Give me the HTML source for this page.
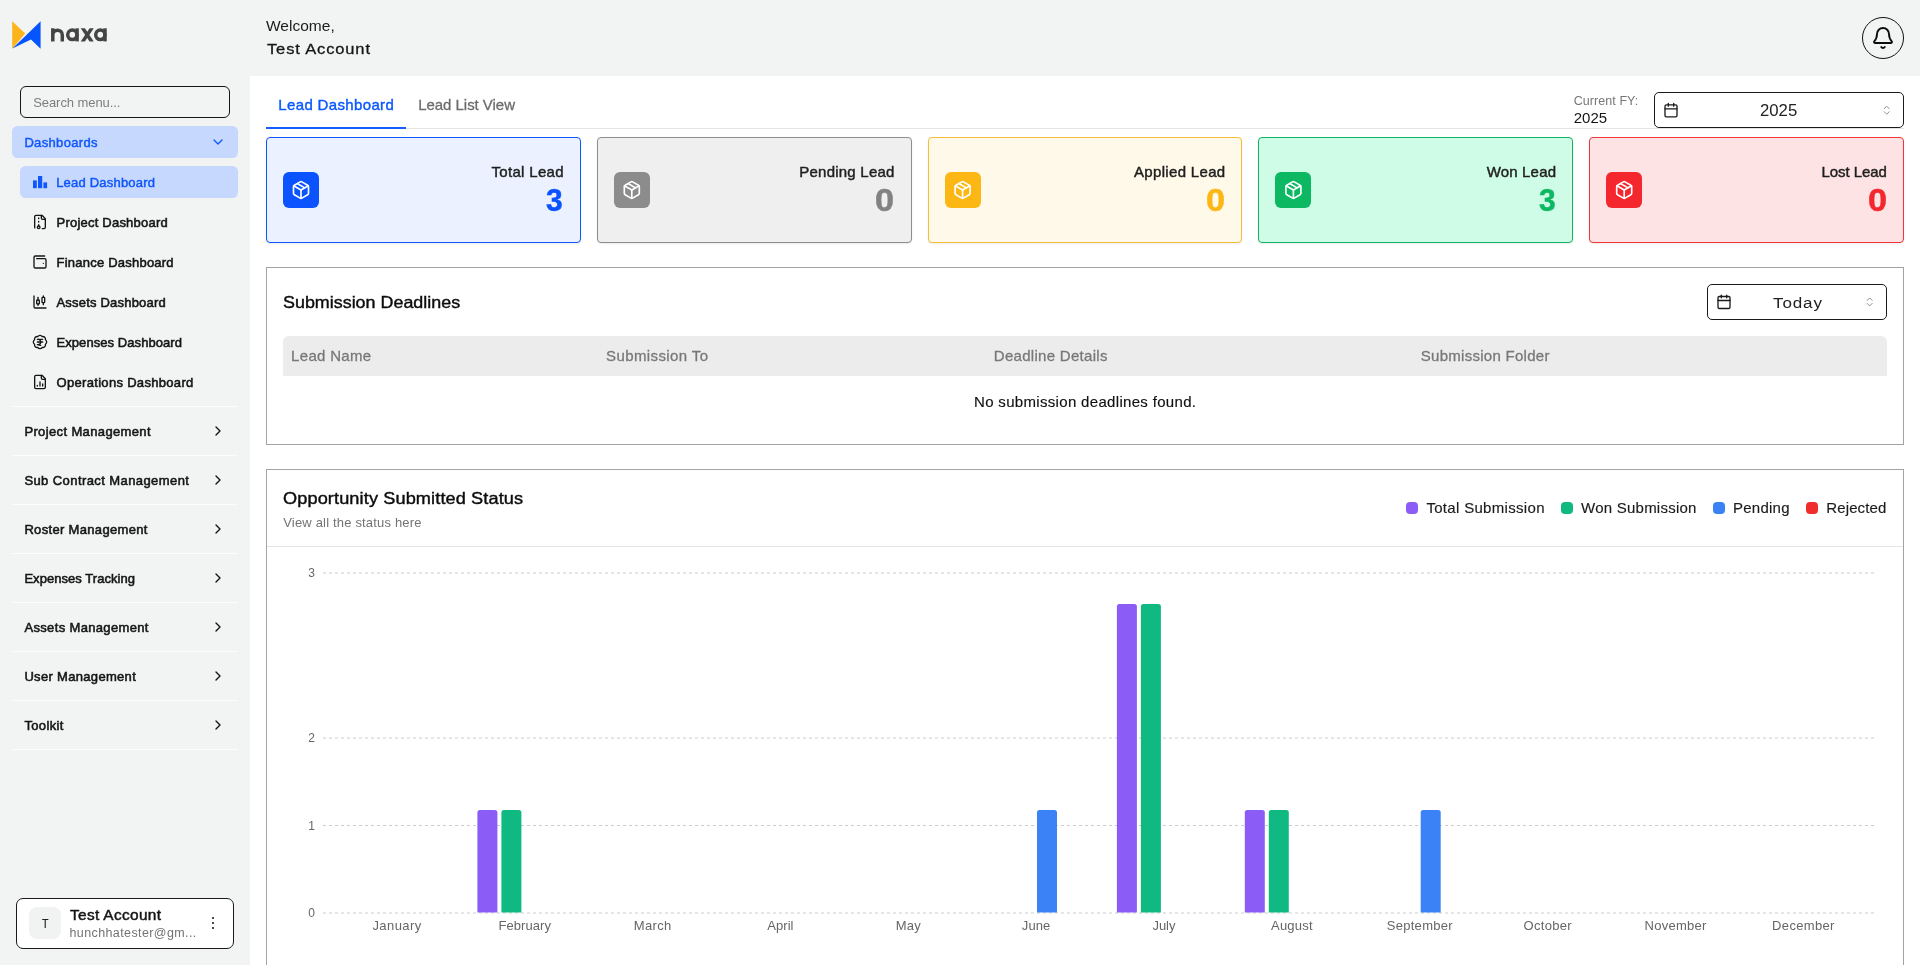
<!DOCTYPE html>
<html lang="en"><head><meta charset="utf-8"><title>Lead Dashboard</title>
<style>
html,body{margin:0;padding:0;}
body{width:1920px;height:965px;overflow:hidden;background:#f2f4f3;position:relative;font-family:"Liberation Sans", sans-serif;}
.b{position:absolute;}
.t{position:absolute;white-space:pre;line-height:1;font-family:"Liberation Sans", sans-serif;transform-origin:0 0;}
svg.ov{position:absolute;left:0;top:0;}
.tx{position:absolute;left:0;top:0;width:1920px;height:965px;will-change:transform;transform:translateZ(0);}
</style></head><body>
<div class="b" style="left:250px;top:76px;width:1670px;height:889px;background:#fff;"></div>
<div class="b" style="left:20px;top:86px;width:210px;height:32px;border:1.5px solid #161616;border-radius:6px;box-sizing:border-box;"></div>
<div class="b" style="left:12px;top:126px;width:226px;height:32px;background:#c6d8fd;border-radius:5.5px;"></div>
<div class="b" style="left:20px;top:166px;width:218px;height:32px;background:#c6d8fd;border-radius:5.5px;"></div>
<div class="b" style="left:12px;top:406px;width:226px;height:1px;background:#fbfcfc;"></div>
<div class="b" style="left:12px;top:455px;width:226px;height:1px;background:#fbfcfc;"></div>
<div class="b" style="left:12px;top:504px;width:226px;height:1px;background:#fbfcfc;"></div>
<div class="b" style="left:12px;top:553px;width:226px;height:1px;background:#fbfcfc;"></div>
<div class="b" style="left:12px;top:602px;width:226px;height:1px;background:#fbfcfc;"></div>
<div class="b" style="left:12px;top:651px;width:226px;height:1px;background:#fbfcfc;"></div>
<div class="b" style="left:12px;top:700px;width:226px;height:1px;background:#fbfcfc;"></div>
<div class="b" style="left:12px;top:749px;width:226px;height:1px;background:#fbfcfc;"></div>
<div class="b" style="left:16px;top:898px;width:218px;height:51px;background:#fff;border:1px solid #1a1a1a;border-radius:7px;box-sizing:border-box;"></div>
<div class="b" style="left:29px;top:907px;width:32px;height:32px;background:#f1f3f3;border-radius:8px;"></div>
<div class="b" style="left:211.7px;top:916.9000000000001px;width:2.6px;height:2.6px;background:#111;border-radius:50%;"></div>
<div class="b" style="left:211.7px;top:921.8000000000001px;width:2.6px;height:2.6px;background:#111;border-radius:50%;"></div>
<div class="b" style="left:211.7px;top:926.7px;width:2.6px;height:2.6px;background:#111;border-radius:50%;"></div>
<div class="b" style="left:266px;top:128px;width:1638px;height:1px;background:#e4e4e4;"></div>
<div class="b" style="left:266px;top:126.5px;width:140px;height:2px;background:#155dfc;"></div>
<div class="b" style="left:1654px;top:92px;width:250px;height:36px;border:1px solid #1b1b1b;border-radius:5px;box-sizing:border-box;background:#fff;"></div>
<div class="b" style="left:1862px;top:17px;width:42px;height:42px;border:1px solid #111;border-radius:50%;box-sizing:border-box;"></div>
<div class="b" style="left:266.0px;top:137px;width:314.8px;height:106px;background:#ebf1ff;border:1px solid #0d57ff;border-radius:4px;box-sizing:border-box;box-shadow:0 1px 2px rgba(0,0,0,.08);"></div>
<div class="b" style="left:283.0px;top:172px;width:36px;height:36px;background:#0a53fe;border-radius:6px;"></div>
<div class="b" style="left:596.8px;top:137px;width:314.8px;height:106px;background:#efefef;border:1px solid #8d8d8d;border-radius:4px;box-sizing:border-box;box-shadow:0 1px 2px rgba(0,0,0,.08);"></div>
<div class="b" style="left:613.8px;top:172px;width:36px;height:36px;background:#8c8c8c;border-radius:6px;"></div>
<div class="b" style="left:927.6px;top:137px;width:314.8px;height:106px;background:#fff9e9;border:1px solid #f6bd3a;border-radius:4px;box-sizing:border-box;box-shadow:0 1px 2px rgba(0,0,0,.08);"></div>
<div class="b" style="left:944.6px;top:172px;width:36px;height:36px;background:#fdb714;border-radius:6px;"></div>
<div class="b" style="left:1258.4px;top:137px;width:314.8px;height:106px;background:#cffce6;border:1px solid #10b466;border-radius:4px;box-sizing:border-box;box-shadow:0 1px 2px rgba(0,0,0,.08);"></div>
<div class="b" style="left:1275.4px;top:172px;width:36px;height:36px;background:#0cb862;border-radius:6px;"></div>
<div class="b" style="left:1589.2px;top:137px;width:314.8px;height:106px;background:#fde3e4;border:1px solid #f2353a;border-radius:4px;box-sizing:border-box;box-shadow:0 1px 2px rgba(0,0,0,.08);"></div>
<div class="b" style="left:1606.2px;top:172px;width:36px;height:36px;background:#f5272e;border-radius:6px;"></div>
<div class="b" style="left:266px;top:267px;width:1638px;height:178px;border:1px solid #a3a3a3;box-sizing:border-box;"></div>
<div class="b" style="left:283px;top:336px;width:1604px;height:40px;background:#ececec;border-radius:6px 6px 0 0;"></div>
<div class="b" style="left:1707px;top:284px;width:180px;height:36px;border:1px solid #1b1b1b;border-radius:5px;box-sizing:border-box;background:#fff;"></div>
<div class="b" style="left:266px;top:469px;width:1638px;height:520px;border:1px solid #a3a3a3;box-sizing:border-box;"></div>
<div class="b" style="left:267px;top:546px;width:1636px;height:1px;background:#e4e4e4;"></div>
<div class="b" style="left:1406px;top:502px;width:12.2px;height:12.2px;background:#8b5cf6;border-radius:4px;"></div>
<div class="b" style="left:1560.7px;top:502px;width:12.2px;height:12.2px;background:#10b981;border-radius:4px;"></div>
<div class="b" style="left:1712.8px;top:502px;width:12.2px;height:12.2px;background:#3b82f6;border-radius:4px;"></div>
<div class="b" style="left:1806px;top:502px;width:12.2px;height:12.2px;background:#f02d2d;border-radius:4px;"></div>
<svg class="ov" width="1920" height="965" viewBox="0 0 1920 965">
<polygon points="12.2,21.3 25.2,33.6 12.2,48.8" fill="#fdb31b"/>
<polygon points="40.6,21.3 40.6,48.8 31,39.6 12.4,48.6" fill="#0555ff"/>
<g fill="none" stroke="#444444" stroke-width="3.5"><path d="M52.8,41.4 V28.3 M52.8,34.9 a4.75,4.75 0 0 1 9.5,0 V41.4"/><ellipse cx="72.3" cy="34.85" rx="4.6" ry="4.75"/><path d="M77.1,28.3 V41.4"/><ellipse cx="100.3" cy="34.85" rx="4.6" ry="4.75"/><path d="M105.0,28.3 V41.4"/></g>
<g fill="#444444"><polygon points="80.7,28.3 84.9,28.3 93.8,41.4 89.6,41.4"/><polygon points="93.8,28.3 89.6,28.3 80.7,41.4 84.9,41.4"/></g>
<g transform="translate(210,134) scale(0.66667)" fill="none" stroke="#0f56fb" stroke-width="2" stroke-linecap="round" stroke-linejoin="round" ><path d="m6 9 6 6 6-6"/></g>
<g fill="#0f56fb"><rect x="33" y="180.4" width="3.8" height="7.8"/><rect x="38" y="176" width="4.2" height="12.2"/><rect x="43.4" y="182.4" width="3.7" height="5.8"/></g>
<g transform="translate(32,214) scale(0.66667)" fill="none" stroke="#141414" stroke-width="2" stroke-linecap="round" stroke-linejoin="round" ><path d="M10 12v-1"/><path d="M10 18v-2"/><path d="M10 7V6"/><path d="M14 2v4a2 2 0 0 0 2 2h4"/><path d="M15.5 22H18a2 2 0 0 0 2-2V7l-5-5H6a2 2 0 0 0-2 2v16a2 2 0 0 0 .274 1.01"/><circle cx="10" cy="20" r="2"/></g>
<g transform="translate(32,254) scale(0.66667)" fill="none" stroke="#141414" stroke-width="2" stroke-linecap="round" stroke-linejoin="round" ><path d="M17 14h.01"/><path d="M7 7h12a2 2 0 0 1 2 2v10a2 2 0 0 1-2 2H5a2 2 0 0 1-2-2V5a2 2 0 0 1 2-2h14"/></g>
<g transform="translate(32,294) scale(0.66667)" fill="none" stroke="#141414" stroke-width="2" stroke-linecap="round" stroke-linejoin="round" ><path d="M9 5v4"/><rect width="4" height="6" x="7" y="9" rx="1"/><path d="M9 15v2"/><path d="M17 3v2"/><rect width="4" height="8" x="15" y="5" rx="1"/><path d="M17 13v3"/><path d="M3 3v16a2 2 0 0 0 2 2h16"/></g>
<g transform="translate(32,334) scale(0.66667)" fill="none" stroke="#141414" stroke-width="2" stroke-linecap="round" stroke-linejoin="round" ><path d="M3.85 8.62a4 4 0 0 1 4.78-4.77 4 4 0 0 1 6.74 0 4 4 0 0 1 4.78 4.78 4 4 0 0 1 0 6.74 4 4 0 0 1-4.77 4.78 4 4 0 0 1-6.75 0 4 4 0 0 1-4.78-4.77 4 4 0 0 1 0-6.76Z"/><path d="M8 8h8"/><path d="M8 12h8"/><path d="m13 17-5-1h1a4 4 0 0 0 0-8"/></g>
<g transform="translate(32,374) scale(0.66667)" fill="none" stroke="#141414" stroke-width="2" stroke-linecap="round" stroke-linejoin="round" ><path d="M15 2H6a2 2 0 0 0-2 2v16a2 2 0 0 0 2 2h12a2 2 0 0 0 2-2V7Z"/><path d="M14 2v4a2 2 0 0 0 2 2h4"/><path d="M8 18v-1"/><path d="M12 18v-6"/><path d="M16 18v-3"/></g>
<g transform="translate(210,423) scale(0.66667)" fill="none" stroke="#141414" stroke-width="2" stroke-linecap="round" stroke-linejoin="round" ><path d="m9 18 6-6-6-6"/></g>
<g transform="translate(210,472) scale(0.66667)" fill="none" stroke="#141414" stroke-width="2" stroke-linecap="round" stroke-linejoin="round" ><path d="m9 18 6-6-6-6"/></g>
<g transform="translate(210,521) scale(0.66667)" fill="none" stroke="#141414" stroke-width="2" stroke-linecap="round" stroke-linejoin="round" ><path d="m9 18 6-6-6-6"/></g>
<g transform="translate(210,570) scale(0.66667)" fill="none" stroke="#141414" stroke-width="2" stroke-linecap="round" stroke-linejoin="round" ><path d="m9 18 6-6-6-6"/></g>
<g transform="translate(210,619) scale(0.66667)" fill="none" stroke="#141414" stroke-width="2" stroke-linecap="round" stroke-linejoin="round" ><path d="m9 18 6-6-6-6"/></g>
<g transform="translate(210,668) scale(0.66667)" fill="none" stroke="#141414" stroke-width="2" stroke-linecap="round" stroke-linejoin="round" ><path d="m9 18 6-6-6-6"/></g>
<g transform="translate(210,717) scale(0.66667)" fill="none" stroke="#141414" stroke-width="2" stroke-linecap="round" stroke-linejoin="round" ><path d="m9 18 6-6-6-6"/></g>
<g transform="translate(1871,26) scale(1.00000)" fill="none" stroke="#0c0c0c" stroke-width="1.9" stroke-linecap="round" stroke-linejoin="round" ><path d="M10.268 21a2 2 0 0 0 3.464 0"/><path d="M3.262 15.326A1 1 0 0 0 4 17h16a1 1 0 0 0 .74-1.673C19.41 13.956 18 12.499 18 8A6 6 0 0 0 6 8c0 4.499-1.411 5.956-2.738 7.326"/></g>
<g transform="translate(1663,102.2) scale(0.66667)" fill="none" stroke="#1b1b1b" stroke-width="2" stroke-linecap="round" stroke-linejoin="round" ><path d="M8 2v4"/><path d="M16 2v4"/><rect width="18" height="18" x="3" y="4" rx="2"/><path d="M3 10h18"/></g>
<g transform="translate(1716,293.8) scale(0.66667)" fill="none" stroke="#1b1b1b" stroke-width="2" stroke-linecap="round" stroke-linejoin="round" ><path d="M8 2v4"/><path d="M16 2v4"/><rect width="18" height="18" x="3" y="4" rx="2"/><path d="M3 10h18"/></g>
<g transform="translate(1880.7,104.2) scale(0.50000)" fill="none" stroke="#222" stroke-width="2" stroke-linecap="round" stroke-linejoin="round" opacity="0.5"><path d="m7 15 5 5 5-5"/><path d="m7 9 5-5 5 5"/></g>
<g transform="translate(1863.7,295.9) scale(0.50000)" fill="none" stroke="#222" stroke-width="2" stroke-linecap="round" stroke-linejoin="round" opacity="0.5"><path d="m7 15 5 5 5-5"/><path d="m7 9 5-5 5 5"/></g>
<g transform="translate(291.0,180) scale(0.83333)" fill="none" stroke="#fff" stroke-width="2" stroke-linecap="round" stroke-linejoin="round" ><path d="M11 21.73a2 2 0 0 0 2 0l7-4A2 2 0 0 0 21 16V8a2 2 0 0 0-1-1.73l-7-4a2 2 0 0 0-2 0l-7 4A2 2 0 0 0 3 8v8a2 2 0 0 0 1 1.73z"/><path d="M12 22V12"/><polyline points="3.29 7 12 12 20.71 7"/><path d="m7.5 4.27 9 5.15"/></g>
<g transform="translate(621.8,180) scale(0.83333)" fill="none" stroke="#fff" stroke-width="2" stroke-linecap="round" stroke-linejoin="round" ><path d="M11 21.73a2 2 0 0 0 2 0l7-4A2 2 0 0 0 21 16V8a2 2 0 0 0-1-1.73l-7-4a2 2 0 0 0-2 0l-7 4A2 2 0 0 0 3 8v8a2 2 0 0 0 1 1.73z"/><path d="M12 22V12"/><polyline points="3.29 7 12 12 20.71 7"/><path d="m7.5 4.27 9 5.15"/></g>
<g transform="translate(952.6,180) scale(0.83333)" fill="none" stroke="#fff" stroke-width="2" stroke-linecap="round" stroke-linejoin="round" ><path d="M11 21.73a2 2 0 0 0 2 0l7-4A2 2 0 0 0 21 16V8a2 2 0 0 0-1-1.73l-7-4a2 2 0 0 0-2 0l-7 4A2 2 0 0 0 3 8v8a2 2 0 0 0 1 1.73z"/><path d="M12 22V12"/><polyline points="3.29 7 12 12 20.71 7"/><path d="m7.5 4.27 9 5.15"/></g>
<g transform="translate(1283.4,180) scale(0.83333)" fill="none" stroke="#fff" stroke-width="2" stroke-linecap="round" stroke-linejoin="round" ><path d="M11 21.73a2 2 0 0 0 2 0l7-4A2 2 0 0 0 21 16V8a2 2 0 0 0-1-1.73l-7-4a2 2 0 0 0-2 0l-7 4A2 2 0 0 0 3 8v8a2 2 0 0 0 1 1.73z"/><path d="M12 22V12"/><polyline points="3.29 7 12 12 20.71 7"/><path d="m7.5 4.27 9 5.15"/></g>
<g transform="translate(1614.2,180) scale(0.83333)" fill="none" stroke="#fff" stroke-width="2" stroke-linecap="round" stroke-linejoin="round" ><path d="M11 21.73a2 2 0 0 0 2 0l7-4A2 2 0 0 0 21 16V8a2 2 0 0 0-1-1.73l-7-4a2 2 0 0 0-2 0l-7 4A2 2 0 0 0 3 8v8a2 2 0 0 0 1 1.73z"/><path d="M12 22V12"/><polyline points="3.29 7 12 12 20.71 7"/><path d="m7.5 4.27 9 5.15"/></g>
<line x1="323" y1="573" x2="1875" y2="573" stroke="#cccccc" stroke-width="1" stroke-dasharray="3 3"/>
<line x1="323" y1="738" x2="1875" y2="738" stroke="#cccccc" stroke-width="1" stroke-dasharray="3 3"/>
<line x1="323" y1="825.5" x2="1875" y2="825.5" stroke="#cccccc" stroke-width="1" stroke-dasharray="3 3"/>
<line x1="323" y1="913" x2="1875" y2="913" stroke="#cccccc" stroke-width="1" stroke-dasharray="3 3"/>
<path d="M477.4,912.5 V812.5 a2.5,2.5 0 0 1 2.5,-2.5 H494.9 a2.5,2.5 0 0 1 2.5,2.5 V912.5 Z" fill="#8b5cf6"/>
<path d="M501.4,912.5 V812.5 a2.5,2.5 0 0 1 2.5,-2.5 H518.9 a2.5,2.5 0 0 1 2.5,2.5 V912.5 Z" fill="#10b981"/>
<path d="M1037.0,912.5 V812.5 a2.5,2.5 0 0 1 2.5,-2.5 H1054.5 a2.5,2.5 0 0 1 2.5,2.5 V912.5 Z" fill="#3b82f6"/>
<path d="M1116.9,912.5 V606.5 a2.5,2.5 0 0 1 2.5,-2.5 H1134.4 a2.5,2.5 0 0 1 2.5,2.5 V912.5 Z" fill="#8b5cf6"/>
<path d="M1140.9,912.5 V606.5 a2.5,2.5 0 0 1 2.5,-2.5 H1158.4 a2.5,2.5 0 0 1 2.5,2.5 V912.5 Z" fill="#10b981"/>
<path d="M1244.8000000000002,912.5 V812.5 a2.5,2.5 0 0 1 2.5,-2.5 H1262.3000000000002 a2.5,2.5 0 0 1 2.5,2.5 V912.5 Z" fill="#8b5cf6"/>
<path d="M1268.8000000000002,912.5 V812.5 a2.5,2.5 0 0 1 2.5,-2.5 H1286.3000000000002 a2.5,2.5 0 0 1 2.5,2.5 V912.5 Z" fill="#10b981"/>
<path d="M1420.7,912.5 V812.5 a2.5,2.5 0 0 1 2.5,-2.5 H1438.2 a2.5,2.5 0 0 1 2.5,2.5 V912.5 Z" fill="#3b82f6"/>
</svg>
<div class="tx">
<span class="t" style="left:33.20px;top:96px;font-size:13px;color:#7d7d7d;letter-spacing:-0.066px;">Search menu...</span>
<span class="t" style="left:24.40px;top:136px;font-size:13px;color:#0f56fb;letter-spacing:0.332px;-webkit-text-stroke:0.45px #0f56fb;">Dashboards</span>
<span class="t" style="left:56.20px;top:176px;font-size:13px;color:#0f56fb;letter-spacing:0.205px;-webkit-text-stroke:0.45px #0f56fb;">Lead Dashboard</span>
<span class="t" style="left:56.50px;top:216px;font-size:13px;color:#151515;letter-spacing:0.221px;-webkit-text-stroke:0.55px #151515;">Project Dashboard</span>
<span class="t" style="left:56.50px;top:256px;font-size:13px;color:#151515;letter-spacing:0.227px;-webkit-text-stroke:0.55px #151515;">Finance Dashboard</span>
<span class="t" style="left:56.50px;top:296px;font-size:13px;color:#151515;letter-spacing:0.198px;-webkit-text-stroke:0.55px #151515;">Assets Dashboard</span>
<span class="t" style="left:56.50px;top:336px;font-size:13px;color:#151515;letter-spacing:0.070px;-webkit-text-stroke:0.55px #151515;">Expenses Dashboard</span>
<span class="t" style="left:56.50px;top:376px;font-size:13px;color:#151515;letter-spacing:0.315px;-webkit-text-stroke:0.55px #151515;">Operations Dashboard</span>
<span class="t" style="left:24.40px;top:425px;font-size:13px;color:#151515;letter-spacing:0.367px;-webkit-text-stroke:0.55px #151515;">Project Management</span>
<span class="t" style="left:24.40px;top:474px;font-size:13px;color:#151515;letter-spacing:0.415px;-webkit-text-stroke:0.55px #151515;">Sub Contract Management</span>
<span class="t" style="left:24.40px;top:523px;font-size:13px;color:#151515;letter-spacing:0.326px;-webkit-text-stroke:0.55px #151515;">Roster Management</span>
<span class="t" style="left:24.40px;top:572px;font-size:13px;color:#151515;letter-spacing:0.047px;-webkit-text-stroke:0.55px #151515;">Expenses Tracking</span>
<span class="t" style="left:24.40px;top:621px;font-size:13px;color:#151515;letter-spacing:0.349px;-webkit-text-stroke:0.55px #151515;">Assets Management</span>
<span class="t" style="left:24.40px;top:670px;font-size:13px;color:#151515;letter-spacing:0.318px;-webkit-text-stroke:0.55px #151515;">User Management</span>
<span class="t" style="left:24.40px;top:719px;font-size:13px;color:#151515;letter-spacing:0.357px;-webkit-text-stroke:0.55px #151515;">Toolkit</span>
<span class="t" style="left:41.74px;top:917px;font-size:13px;color:#222;transform:scaleX(0.8200);-webkit-text-stroke:0.15px #222;">T</span>
<span class="t" style="left:69.50px;top:908px;font-size:14px;color:#151515;letter-spacing:0.303px;transform:scaleX(1.1000);-webkit-text-stroke:0.45px #151515;">Test Account</span>
<span class="t" style="left:69.50px;top:927px;font-size:12.5px;color:#737373;letter-spacing:0.394px;">hunchhatester@gm...</span>
<span class="t" style="left:266.25px;top:19px;font-size:14.5px;color:#1c1c1c;transform:scaleX(1.0708);">Welcome,</span>
<span class="t" style="left:267.00px;top:41px;font-size:15px;color:#151515;letter-spacing:0.779px;transform:scaleX(1.1000);-webkit-text-stroke:0.3px #151515;">Test Account</span>
<span class="t" style="left:278.30px;top:97px;font-size:15px;color:#0b58ff;letter-spacing:0.352px;-webkit-text-stroke:0.4px #0b58ff;">Lead Dashboard</span>
<span class="t" style="left:418.20px;top:97px;font-size:15px;color:#6c6c6c;letter-spacing:-0.038px;-webkit-text-stroke:0.3px #6c6c6c;">Lead List View</span>
<span class="t" style="left:1573.70px;top:95px;font-size:12.5px;color:#777;letter-spacing:0.068px;">Current FY:</span>
<span class="t" style="left:1573.70px;top:110px;font-size:15px;color:#151515;letter-spacing:0.042px;">2025</span>
<span class="t" style="left:1760.30px;top:103px;font-size:16px;color:#222;transform:scaleX(1.0451);">2025</span>
<span class="t" style="left:491.50px;top:164px;font-size:15px;color:#1f1f1f;letter-spacing:0.318px;-webkit-text-stroke:0.45px #1f1f1f;">Total Lead</span>
<span class="t" style="left:546.48px;top:184px;font-size:32px;color:#0a53fe;font-weight:700;transform:scaleX(0.9350);-webkit-text-stroke:0.5px #0a53fe;">3</span>
<span class="t" style="left:799.30px;top:164px;font-size:15px;color:#1f1f1f;letter-spacing:0.228px;-webkit-text-stroke:0.45px #1f1f1f;">Pending Lead</span>
<span class="t" style="left:875.28px;top:184px;font-size:32px;color:#828282;font-weight:700;transform:scaleX(1.0700);-webkit-text-stroke:0.5px #828282;">0</span>
<span class="t" style="left:1134.00px;top:164px;font-size:15px;color:#1f1f1f;letter-spacing:0.329px;-webkit-text-stroke:0.45px #1f1f1f;">Applied Lead</span>
<span class="t" style="left:1206.08px;top:184px;font-size:32px;color:#fdb714;font-weight:700;transform:scaleX(1.0700);-webkit-text-stroke:0.5px #fdb714;">0</span>
<span class="t" style="left:1486.70px;top:164px;font-size:15px;color:#1f1f1f;letter-spacing:0.170px;-webkit-text-stroke:0.45px #1f1f1f;">Won Lead</span>
<span class="t" style="left:1538.88px;top:184px;font-size:32px;color:#0cb862;font-weight:700;transform:scaleX(0.9350);-webkit-text-stroke:0.5px #0cb862;">3</span>
<span class="t" style="left:1821.50px;top:164px;font-size:15px;color:#1f1f1f;letter-spacing:-0.074px;-webkit-text-stroke:0.45px #1f1f1f;">Lost Lead</span>
<span class="t" style="left:1867.68px;top:184px;font-size:32px;color:#f5272e;font-weight:700;transform:scaleX(1.0700);-webkit-text-stroke:0.5px #f5272e;">0</span>
<span class="t" style="left:283.25px;top:294px;font-size:16.5px;color:#0c0c0c;transform:scaleX(1.0850);-webkit-text-stroke:0.4px #0c0c0c;">Submission Deadlines</span>
<span class="t" style="left:1772.60px;top:295px;font-size:15.5px;color:#222;letter-spacing:0.793px;transform:scaleX(1.1000);">Today</span>
<span class="t" style="left:291.10px;top:348px;font-size:15px;color:#787878;letter-spacing:0.317px;-webkit-text-stroke:0.3px #787878;">Lead Name</span>
<span class="t" style="left:606.10px;top:348px;font-size:15px;color:#787878;letter-spacing:0.385px;-webkit-text-stroke:0.3px #787878;">Submission To</span>
<span class="t" style="left:993.75px;top:348px;font-size:15px;color:#787878;letter-spacing:0.301px;-webkit-text-stroke:0.3px #787878;">Deadline Details</span>
<span class="t" style="left:1420.80px;top:348px;font-size:15px;color:#787878;letter-spacing:0.274px;-webkit-text-stroke:0.3px #787878;">Submission Folder</span>
<span class="t" style="left:974.00px;top:394px;font-size:15px;color:#101010;letter-spacing:0.323px;-webkit-text-stroke:0.15px #101010;">No submission deadlines found.</span>
<span class="t" style="left:283.25px;top:490px;font-size:16.5px;color:#0c0c0c;letter-spacing:0.103px;transform:scaleX(1.1000);-webkit-text-stroke:0.4px #0c0c0c;">Opportunity Submitted Status</span>
<span class="t" style="left:283.25px;top:516px;font-size:13px;color:#747474;letter-spacing:0.177px;">View all the status here</span>
<span class="t" style="left:1426.40px;top:500px;font-size:15px;color:#1b1b1b;letter-spacing:0.314px;-webkit-text-stroke:0.15px #1b1b1b;">Total Submission</span>
<span class="t" style="left:1581.10px;top:500px;font-size:15px;color:#1b1b1b;letter-spacing:0.232px;-webkit-text-stroke:0.15px #1b1b1b;">Won Submission</span>
<span class="t" style="left:1733.00px;top:500px;font-size:15px;color:#1b1b1b;letter-spacing:0.240px;-webkit-text-stroke:0.15px #1b1b1b;">Pending</span>
<span class="t" style="left:1826.30px;top:500px;font-size:15px;color:#1b1b1b;letter-spacing:0.107px;-webkit-text-stroke:0.15px #1b1b1b;">Rejected</span>
<span class="t" style="left:308.16px;top:567px;font-size:12px;color:#666;">3</span>
<span class="t" style="left:308.16px;top:732px;font-size:12px;color:#666;">2</span>
<span class="t" style="left:308.16px;top:820px;font-size:12px;color:#666;">1</span>
<span class="t" style="left:308.16px;top:907px;font-size:12px;color:#666;">0</span>
<span class="t" style="left:372.43px;top:919px;font-size:13px;color:#666;letter-spacing:0.417px;">January</span>
<span class="t" style="left:498.41px;top:919px;font-size:13px;color:#666;letter-spacing:0.067px;">February</span>
<span class="t" style="left:633.77px;top:919px;font-size:13px;color:#666;letter-spacing:0.344px;">March</span>
<span class="t" style="left:767.25px;top:919px;font-size:13px;color:#666;letter-spacing:0.059px;">April</span>
<span class="t" style="left:895.74px;top:919px;font-size:13px;color:#666;letter-spacing:0.219px;">May</span>
<span class="t" style="left:1021.85px;top:919px;font-size:13px;color:#666;letter-spacing:0.099px;">June</span>
<span class="t" style="left:1152.46px;top:919px;font-size:13px;color:#666;letter-spacing:-0.042px;">July</span>
<span class="t" style="left:1270.97px;top:919px;font-size:13px;color:#666;letter-spacing:0.243px;">August</span>
<span class="t" style="left:1386.68px;top:919px;font-size:13px;color:#666;letter-spacing:0.301px;">September</span>
<span class="t" style="left:1523.54px;top:919px;font-size:13px;color:#666;letter-spacing:0.292px;">October</span>
<span class="t" style="left:1644.55px;top:919px;font-size:13px;color:#666;letter-spacing:0.247px;">November</span>
<span class="t" style="left:1772.11px;top:919px;font-size:13px;color:#666;letter-spacing:0.333px;">December</span>
</div>
</body></html>
